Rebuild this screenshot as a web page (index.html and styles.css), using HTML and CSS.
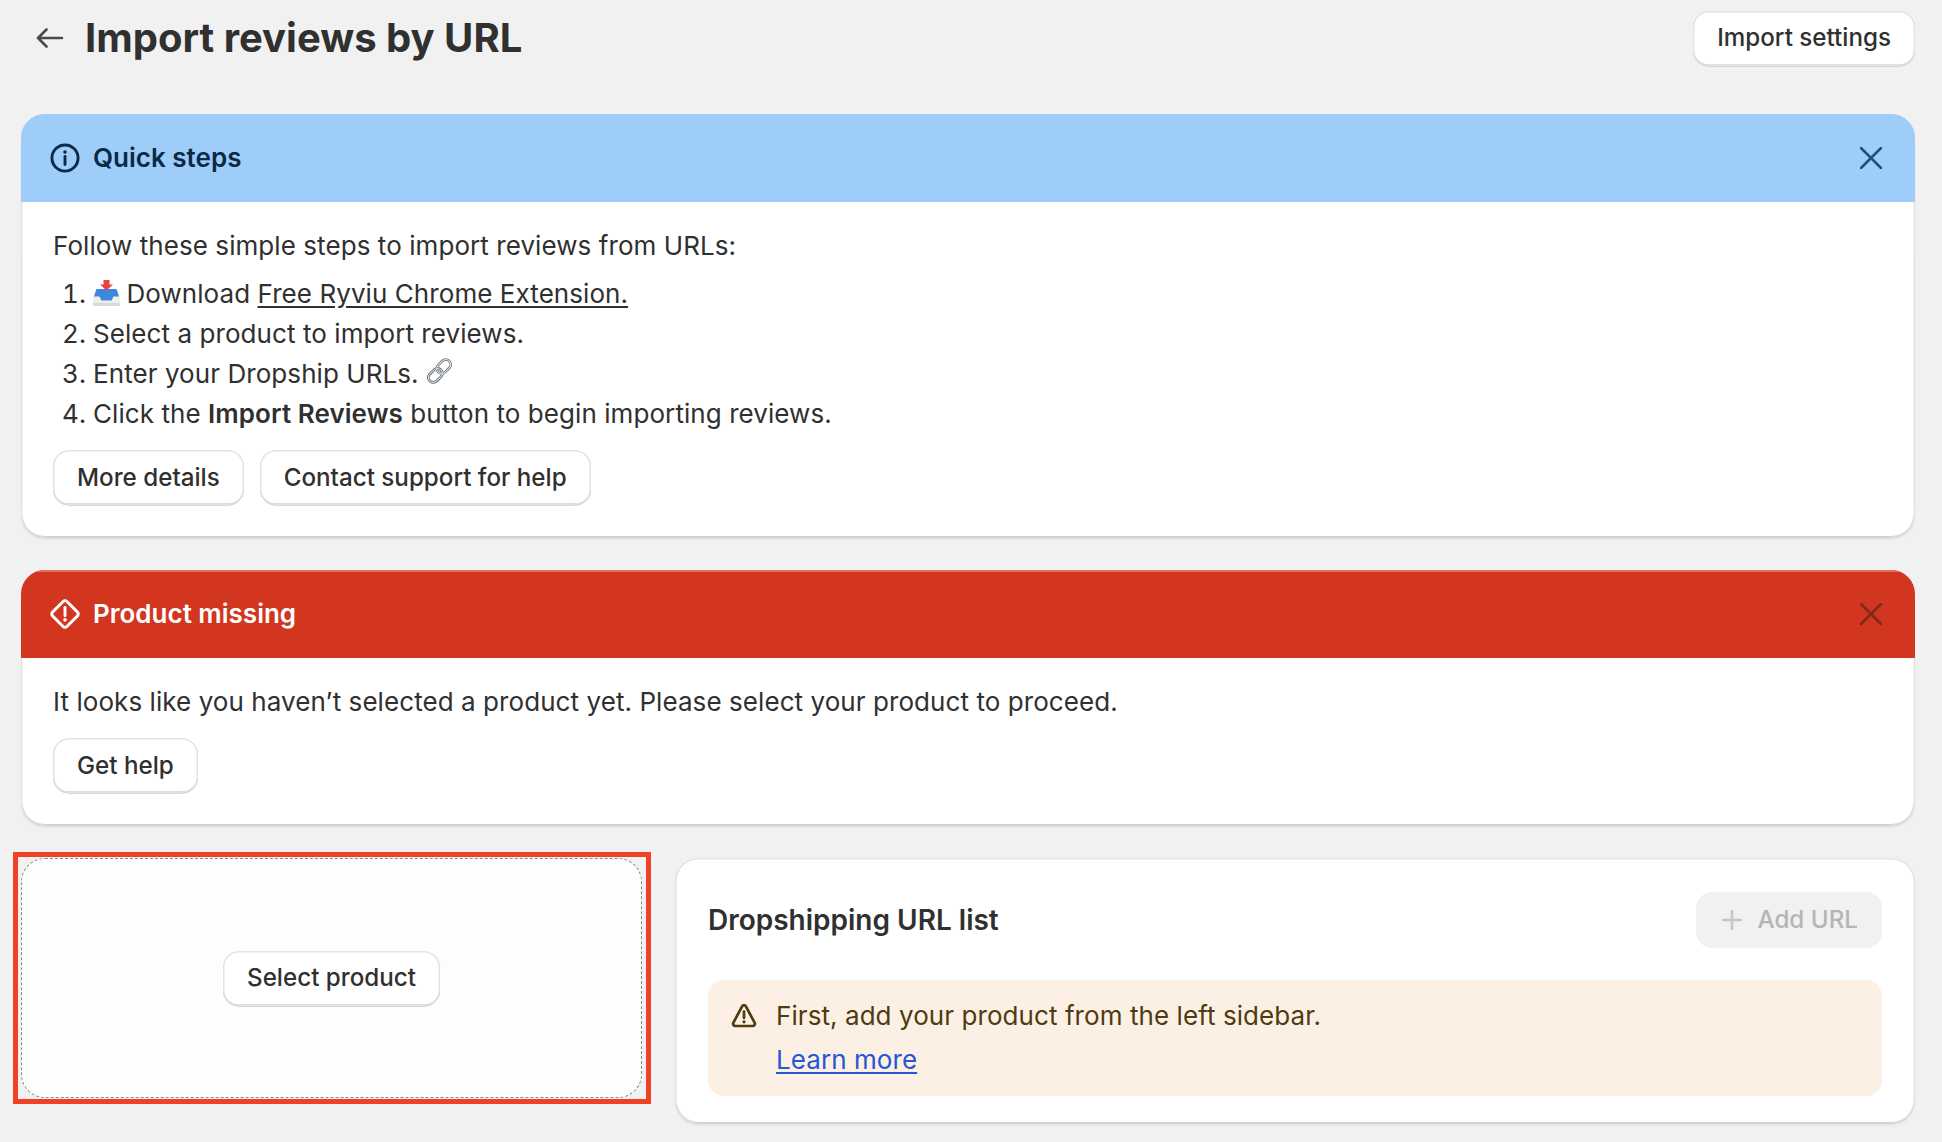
FILE: index.html
```html
<!DOCTYPE html>
<html lang="en">
<head>
<meta charset="utf-8">
<title>Import reviews by URL</title>
<link rel="stylesheet" href="styles.css">
</head>
<body>
<main class="page">
  <header class="topbar">
    <div class="topbar-left">
      <svg class="back" viewBox="0 0 28 20" aria-hidden="true"><path d="M26 10H2M10.5 1.5 2 10l8.5 8.5"/></svg>
      <h1 class="page-title">Import reviews by URL</h1>
    </div>
    <button class="btn">Import settings</button>
  </header>

  <section class="card">
    <div class="card-head head-blue">
      <div class="head-title">
        <svg class="head-icon" viewBox="0 0 28 28" aria-hidden="true"><circle cx="14" cy="14" r="12.200"/><path d="M14 12.500v7.500"/><circle class="dot" cx="14" cy="8.400" r="1.700"/></svg>
        <span>Quick steps</span>
      </div>
      <svg class="close close-blue" viewBox="0 0 22 22" aria-hidden="true"><path d="M1 1l20 20M21 1 1 21"/></svg>
    </div>
    <div class="card-body">
      <p class="line">Follow these simple steps to import reviews from URLs:</p>
      <ol class="steps">
        <li>
          <svg class="emoji emoji-tray" viewBox="0 0 27 26" aria-hidden="true">
            <path fill="#f0eeea" d="M2.500 11h22L27 17v7.500a1.500 1.500 0 0 1-1.500 1.500h-24A1.500 1.500 0 0 1 0 24.500V17z"/>
            <path fill="#dcd9d3" d="M0 23h27v1.500a1.500 1.500 0 0 1-1.500 1.500h-24A1.500 1.500 0 0 1 0 24.500z"/>
            <path fill="#3b88dc" d="M1 16.500 3.500 9h20l2.500 7.500h-5.500l-2 4h-10l-2-4z"/>
            <path fill="#e8453c" d="M10.500 0h6v4.500H20L13.500 10.500 7 4.500h3.500z"/>
          </svg>
          Download <a class="link-plain" href="#">Free Ryviu Chrome Extension.</a>
        </li>
        <li>Select a product to import reviews.</li>
        <li>Enter your Dropship URLs.
          <svg class="emoji emoji-link" viewBox="0 0 26 25" aria-hidden="true">
            <g fill="none" stroke-linecap="round">
              <rect x="1.500" y="12" width="15" height="9.500" rx="4.700" transform="rotate(-45 9 16.700)" stroke="#565d67" stroke-width="2.600"/>
              <rect x="9.500" y="3.500" width="15" height="9.500" rx="4.700" transform="rotate(-45 17 8.200)" stroke="#6f7680" stroke-width="2.600"/>
              <rect x="1.500" y="12" width="15" height="9.500" rx="4.700" transform="rotate(-45 9 16.700)" stroke="#e4e7ea" stroke-width="1"/>
              <rect x="9.500" y="3.500" width="15" height="9.500" rx="4.700" transform="rotate(-45 17 8.200)" stroke="#e4e7ea" stroke-width="1"/>
            </g>
          </svg>
        </li>
        <li>Click the <strong>Import Reviews</strong> button to begin importing reviews.</li>
      </ol>
      <div class="actions">
        <button class="btn">More details</button>
        <button class="btn">Contact support for help</button>
      </div>
    </div>
  </section>

  <section class="card">
    <div class="card-head head-red">
      <div class="head-title">
        <svg class="head-icon icon-white" viewBox="1 1 28 28" aria-hidden="true"><rect x="5.500" y="5.500" width="19" height="19" rx="2.500" transform="rotate(45 15 15)"/><path d="M15 8.800v7.800"/><circle class="dot" cx="15" cy="20.500" r="1.700"/></svg>
        <span>Product missing</span>
      </div>
      <svg class="close close-red" viewBox="0 0 22 22" aria-hidden="true"><path d="M1 1l20 20M21 1 1 21"/></svg>
    </div>
    <div class="card-body">
      <p class="line">It looks like you haven’t selected a product yet. Please select your product to proceed.</p>
      <div class="actions">
        <button class="btn">Get help</button>
      </div>
    </div>
  </section>

  <div class="bottom-row">
    <div class="picker">
      <button class="btn">Select product</button>
      <div class="picker-mark"></div>
    </div>
    <section class="card url-card">
      <div class="url-head">
        <h2 class="url-title">Dropshipping URL list</h2>
        <button class="btn-disabled" disabled>
          <svg class="plus" viewBox="0 0 20 20" aria-hidden="true"><path d="M10 0v20M0 10h20"/></svg>
          Add URL
        </button>
      </div>
      <div class="notice">
        <svg class="notice-icon" viewBox="0 0 26 26" aria-hidden="true"><path d="M13 2.200c.8 0 1.500.4 1.900 1.100l8.700 16.400c.8 1.600-.3 3.300-2 3.300H4.400c-1.700 0-2.800-1.700-2-3.300l8.700-16.400c.4-.7 1.100-1.100 1.900-1.100z"/><path d="M13 8.500v6.500"/><circle class="dot" cx="13" cy="18.800" r="1.600"/></svg>
        <div class="notice-text">
          <p>First, add your product from the left sidebar.</p>
          <a class="link-blue" href="#">Learn more</a>
        </div>
      </div>
    </section>
  </div>
</main>
</body>
</html>
```

FILE: styles.css
```css
* { box-sizing: border-box; }
html, body { margin: 0; padding: 0; }
body {
  background: #f1f1f1;
  color: #303030;
  font-family: Inter, "Noto Sans", sans-serif;
  font-size: 26px;
  font-weight: 425;
  line-height: 40px;
}
.page { padding: 11px 27px 20px 21px; width: 1942px; height: 1142px; overflow: hidden; }
p, h1, h2, ol { margin: 0; padding: 0; }

.topbar { display: flex; justify-content: space-between; align-items: center; height: 54px; margin-bottom: 49px; }
.topbar-left { display: flex; align-items: center; gap: 21px; padding-left: 15px; }
.back { width: 28px; height: 20px; fill: none; stroke: #4a4a4a; stroke-width: 2.600; stroke-linecap: round; stroke-linejoin: round; }
.page-title { font-size: 40px; font-weight: 650; line-height: 54px; color: #303030; }

.btn {
  font: inherit;
  font-size: 24.200px;
  font-weight: 550;
  color: #303030;
  height: 55px;
  padding: 0 24px;
  background: #fff;
  border: 0;
  border-radius: 16px;
  box-shadow: inset 0 0 0 1.500px #e3e3e3, inset 0 -1.500px 0 #b5b5b5, 0 .5px 0 #b5b5b5;
  white-space: nowrap;
}

.card {
  background: #fff;
  border-radius: 24px;
  overflow: hidden;
  margin-bottom: 33px;
  box-shadow: inset 1.500px 0 0 #e2e2e2, inset -1.500px 0 0 #e2e2e2, inset 0 1.500px 0 #e6e6e6, inset 0 -1px 0 #d2d2d2, 0 1px 0 #d2d2d2, 0 3px 2px rgba(0, 0, 0, .05);
}
.card-head { height: 88px; display: flex; justify-content: space-between; align-items: center; padding: 0 33px 0 29px; }
.head-blue { background: #9fcdf9; color: #0b2a45; }
.head-red { background: #d2361f; color: #fff; box-shadow: inset 0 2px 0 #e8705f; }
.head-title { display: flex; align-items: center; gap: 13px; font-weight: 600; }
.head-icon { width: 30px; height: 30px; fill: none; stroke: currentColor; stroke-width: 2.700; stroke-linecap: round; stroke-linejoin: round; }
.dot { fill: currentColor; stroke: none; }
.close { width: 22px; height: 22px; fill: none; stroke-width: 2.500; stroke-linecap: round; }
.close-blue { stroke: #1f5077; }
.close-red { stroke: #7d2a18; }

.card-body { padding: 24px 32px 32px; }
.line, .steps, .notice-text { letter-spacing: .07px; }
.line { margin-bottom: 8px; }
.steps { padding-left: 40px; }
.steps li { height: 40px; }
.emoji { width: 27px; height: 26px; vertical-align: -3px; }
.emoji-tray { margin-right: -1px; }
.emoji-link { vertical-align: -1px; }
.link-plain { color: #303030; text-decoration: underline; text-underline-offset: 3px; }
strong { font-weight: 600; }
.actions { display: flex; gap: 16px; margin-top: 16px; }

.bottom-row { display: flex; gap: 33px; align-items: flex-start; }
.picker {
  position: relative;
  width: 621px;
  height: 240px;
  flex: none;
  display: flex;
  align-items: center;
  justify-content: center;
  background: #fdfdfd;
  border: 1px dashed #8a8a8a;
  border-radius: 24px;
}
.picker-mark { position: absolute; inset: -7px -10px -7px -9px; border: 5px solid #f04125; pointer-events: none; }

.url-card { flex: 1; height: 265px; padding: 34px 33px 26px; margin-bottom: 0; }
.url-head { display: flex; justify-content: space-between; align-items: center; height: 56px; margin-bottom: 32px; }
.url-title { font-size: 28px; font-weight: 600; line-height: 40px; }
.btn-disabled {
  font: inherit;
  font-size: 24.200px;
  font-weight: 550;
  height: 56px;
  padding: 0 24px 0 26px;
  color: #b5b5b5;
  background: #f1f1f1;
  border: 0;
  border-radius: 16px;
  display: flex;
  align-items: center;
  gap: 15px;
}
.plus { width: 20px; height: 20px; stroke: #c6c6c6; stroke-width: 2.500; stroke-linecap: round; }

.notice { background: #fcf0e5; border-radius: 16px; padding: 16px 23px; display: flex; gap: 19px; color: #4f3b0f; }
.notice-icon { flex: none; width: 26px; height: 26px; margin-top: 7px; fill: none; stroke: currentColor; stroke-width: 2.700; stroke-linejoin: round; stroke-linecap: round; }
.notice-text p { margin-bottom: 4px; }
.link-blue { display: block; color: #2457d6; text-decoration: underline; text-underline-offset: 3px; }
```
